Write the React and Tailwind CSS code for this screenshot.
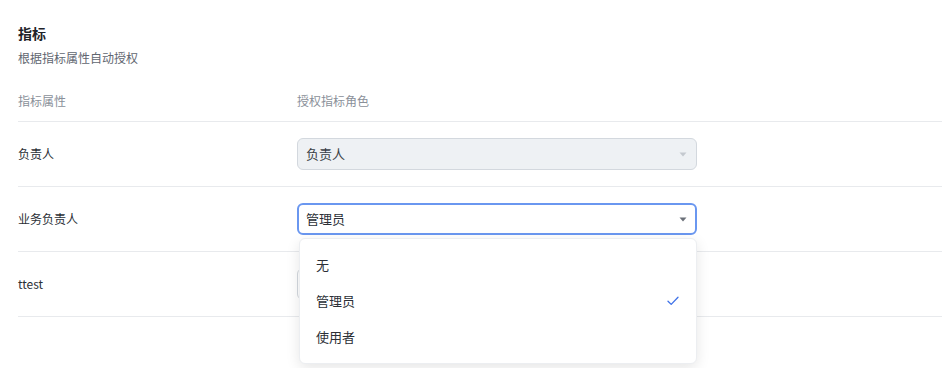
import React from "react"

const font = { fontFamily: '"Noto Sans CJK SC", "Noto Sans", sans-serif' }

function Caret({ color }) {
  return (
    <svg width="8" height="5" viewBox="0 0 8 5" className="shrink-0">
      <path d="M0.5 0.5h7L4 4.5z" fill={color} />
    </svg>
  )
}

function Check() {
  return (
    <svg width="12" height="10" viewBox="0 0 12 10" fill="none">
      <path d="M1 5.2l3.2 3.2L11 1.2" stroke="#3f72e8" strokeWidth="1.3" strokeLinecap="round" strokeLinejoin="round" />
    </svg>
  )
}

function Row({ label, children }) {
  return (
    <div className="flex h-[65px] items-center border-b border-[#e8eaed]">
      <div className="w-[279px] text-[12px] text-[#2b2f36]">{label}</div>
      <div className="relative">{children}</div>
    </div>
  )
}

export default function App() {
  const options = ["无", "管理员", "使用者"]
  return (
    <div className="h-[368px] w-[942px] overflow-hidden bg-white pl-[18px]" style={font}>
      <div className="pt-[23px]">
        <div className="text-[14px] font-semibold leading-5 text-[#1f2329]">指标</div>
        <div className="mt-[6px] text-[12px] leading-[18px] text-[#5f6670]">根据指标属性自动授权</div>
      </div>
      <div className="mt-[13px] flex h-[42px] items-center border-b border-[#e8eaed] text-[12px] text-[#8a9099]">
        <div className="w-[279px]">指标属性</div>
        <div>授权指标角色</div>
      </div>

      <Row label="负责人">
        <div className="flex h-[32px] w-[400px] items-center justify-between rounded-md border border-[#d3d8de] bg-[#eef1f4] pl-[8px] pr-[9px] text-[13px] text-[#3a3f46]">
          <span>负责人</span>
          <Caret color="#c4c9cf" />
        </div>
      </Row>

      <Row label="业务负责人">
        <div className="flex h-[32px] w-[400px] items-center justify-between rounded-md border-2 border-[#6a97f0] bg-white pl-[7px] pr-[8px] text-[13px] text-[#2b2f36]">
          <span>管理员</span>
          <Caret color="#6b7079" />
        </div>
        <div className="absolute left-[2px] top-[35px] z-10 w-[398px] rounded-md border border-[#eceef1] bg-white py-2 shadow-[0_4px_14px_rgba(0,0,0,0.10)]">
          {options.map((o) => (
            <div key={o} className="flex h-9 items-center justify-between pl-[16px] pr-[17px] text-[13px] text-[#2b2f36]">
              <span>{o}</span>
              {o === "管理员" && <Check />}
            </div>
          ))}
        </div>
      </Row>

      <Row label="ttest">
        <div className="flex h-[32px] w-[400px] items-center justify-between rounded-md border border-[#d3d8de] bg-white pl-[8px] pr-[9px] text-[13px] text-[#2b2f36]">
          <span>管理员</span>
          <Caret color="#6b7079" />
        </div>
      </Row>
    </div>
  )
}
